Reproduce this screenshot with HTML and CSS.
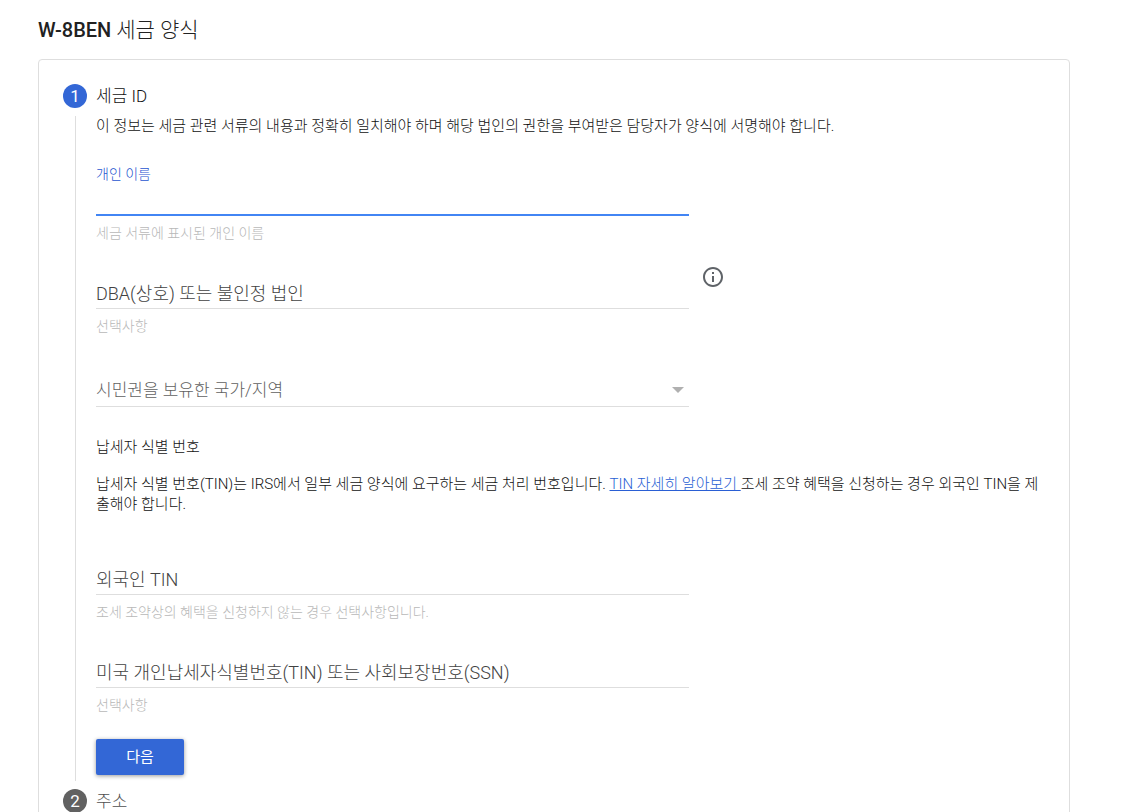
FILE: index.html
```html
<!DOCTYPE html>
<html lang="ko">

<head>
    <meta charset="UTF-8">
    <meta name="viewport" content="width=device-width, initial-scale=1.0">
    <title>W-8BEN 세금 양식</title>
    <link rel="stylesheet" href="styles.css">
</head>

<body>
    <h1>W-8BEN <span>세금 양식</span></h1>

    <form class="card">
        <section>
            <div class="step-header">
                <span class="step-number">1</span>
                <h2>세금 ID</h2>
            </div>
            <div class="step-body">
                <p>이 정보는 세금 관련 서류의 내용과 정확히 일치해야 하며 해당 법인의 권한을 부여받은 담당자가 양식에 서명해야 합니다.</p>

                <div class="field active">
                    <label for="name">개인 이름</label>
                    <input type="text" id="name" aria-describedby="nameHint">
                    <div class="hint" id="nameHint">세금 서류에 표시된 개인 이름</div>
                </div>

                <div class="field-row">
                    <div class="field">
                        <label for="dba">DBA(상호) 또는 불인정 법인</label>
                        <input type="text" id="dba" aria-describedby="dbaHint">
                        <div class="hint" id="dbaHint">선택사항</div>
                    </div>
                    <button type="button" class="info" aria-label="도움말">
                        <svg width="24" height="24" viewBox="0 0 24 24" fill="#5f6368">
                            <path d="M11 17h2v-6h-2v6zm1-15C6.480 2 2 6.480 2 12s4.480 10 10 10 10-4.480 10-10S17.520 2 12 2zm0 18c-4.410 0-8-3.590-8-8s3.590-8 8-8 8 3.590 8 8-3.590 8-8 8zM11 9h2V7h-2v2z"/>
                        </svg>
                    </button>
                </div>

                <div class="select-box">
                    <select id="country" aria-label="시민권을 보유한 국가/지역">
                        <option>시민권을 보유한 국가/지역</option>
                    </select>
                    <svg width="12" height="6" viewBox="0 0 12 6" fill="#b0b0b0">
                        <path d="M0 0h12L6 6z"/>
                    </svg>
                </div>

                <h3>납세자 식별 번호</h3>
                <p class="tin-text">납세자 식별 번호(TIN)는 IRS에서 일부 세금 양식에 요구하는 세금 처리 번호입니다. <a href="#">TIN 자세히 알아보기 </a>조세 조약 혜택을 신청하는 경우 외국인 TIN을 제출해야 합니다.</p>

                <div class="field">
                    <label for="foreignTin">외국인 TIN</label>
                    <input type="text" id="foreignTin" aria-describedby="foreignHint">
                    <div class="hint" id="foreignHint">조세 조약상의 혜택을 신청하지 않는 경우 선택사항입니다.</div>
                </div>

                <div class="field">
                    <label for="usTin">미국 개인납세자식별번호(TIN) 또는 사회보장번호(SSN)</label>
                    <input type="text" id="usTin" aria-describedby="usHint">
                    <div class="hint" id="usHint">선택사항</div>
                </div>

                <button type="button" class="btn">다음</button>
            </div>
        </section>

        <section class="inactive">
            <div class="step-header">
                <span class="step-number">2</span>
                <h2>주소</h2>
            </div>
        </section>
    </form>
</body>

</html>
```

FILE: styles.css
```css
* {
    margin: 0;
    padding: 0;
    box-sizing: border-box;
}

body {
    padding: 16px 55px 24px 38px;
    font-family: Roboto, 'Noto Sans CJK KR', sans-serif;
    font-size: 15px;
    font-weight: 300;
    line-height: 20px;
    color: #111;
    background-color: #fff;
}

h1 {
    font-size: 20px;
    line-height: 28px;
    font-weight: 500;
    color: #212121;
    margin-bottom: 15px;
}

h1 span {
    font-size: 21px;
    font-weight: 300;
}

h2 {
    font-size: 17px;
    line-height: 24px;
    font-weight: 300;
}

h3 {
    font-size: 15px;
    line-height: 20px;
    font-weight: 300;
    margin-top: 30px;
}

a {
    color: #2a5fd4;
    text-decoration: underline;
}

.card {
    border: 1px solid #dedede;
    border-radius: 4px;
    padding: 24px;
}

/* Steps */
.step-header {
    display: flex;
    align-items: center;
    gap: 9px;
}

.step-number {
    width: 24px;
    height: 24px;
    border-radius: 50%;
    background-color: #3367d6;
    color: #fff;
    font-size: 17px;
    font-weight: 400;
    line-height: 24px;
    text-align: center;
}

.step-body {
    margin: 8px 0 8px 12px;
    padding: 0 0 6px 20px;
    border-left: 1px solid #dedede;
}

.inactive h2 {
    color: #505050;
}

.inactive .step-number {
    background-color: #616161;
}

/* Fields */
.field {
    display: grid;
    grid-template-rows: 20px 32px 27px;
    width: 593px;
    max-width: 100%;
    margin-top: 14px;
}

.field label {
    grid-area: 2 / 1;
    font-size: 18px;
    line-height: 34px;
    color: #424242;
    pointer-events: none;
}

.field input {
    grid-area: 2 / 1;
    width: 100%;
    border: none;
    border-bottom: 1px solid #dedede;
    outline: none;
    background: transparent;
    font-family: inherit;
    font-size: 18px;
    color: #212121;
}

.field .hint {
    grid-area: 3 / 1;
    margin-top: 7px;
    font-size: 14px;
    color: #b8b8b8;
}

.field.active {
    margin-top: 28px;
}

.field.active label {
    grid-area: 1 / 1;
    font-size: 14px;
    line-height: 20px;
    color: #1f56d0;
}

.field.active input {
    border-bottom: 2px solid #4285f4;
}

.field-row {
    display: flex;
    align-items: flex-start;
    gap: 12px;
}

.info {
    margin-top: 22px;
    border: none;
    background: none;
    cursor: pointer;
}

.info svg {
    display: block;
}

.select-box {
    display: grid;
    align-items: center;
    width: 593px;
    max-width: 100%;
    margin-top: 38px;
    border-bottom: 1px solid #dedede;
}

.select-box select {
    grid-area: 1 / 1;
    height: 32px;
    border: none;
    outline: none;
    appearance: none;
    background: transparent;
    font-family: inherit;
    font-size: 17px;
    font-weight: 300;
    color: #616161;
}

.select-box svg {
    grid-area: 1 / 1;
    justify-self: end;
    margin-right: 5px;
    pointer-events: none;
}

.tin-text {
    margin: 17px 0 29px;
}

.btn {
    display: block;
    min-width: 88px;
    height: 36px;
    margin-top: 24px;
    padding-bottom: 4px;
    border: none;
    border-radius: 2px;
    background-color: #3367d6;
    box-shadow: 0 1px 4px rgba(0, 0, 0, 0.4);
    color: #fff;
    font-family: inherit;
    font-size: 15px;
    font-weight: 400;
    cursor: pointer;
}
```
